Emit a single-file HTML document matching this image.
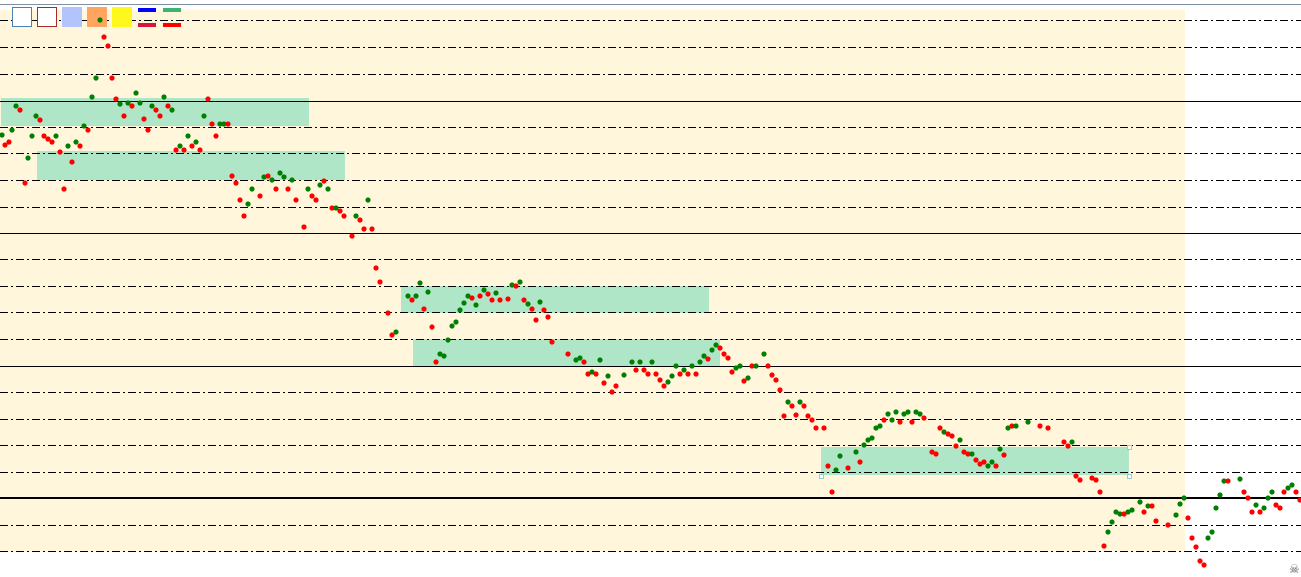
<!DOCTYPE html>
<html><head><style>
html,body{margin:0;padding:0;background:#fff;width:1301px;height:577px;overflow:hidden}
svg{display:block}
</style></head><body>
<svg width="1301" height="577" xmlns="http://www.w3.org/2000/svg">
<rect x="0" y="0" width="1301" height="577" fill="#fff"/>
<line x1="0" y1="4.5" x2="1301" y2="4.5" stroke="#8090a0" stroke-width="1"/>
<rect x="0" y="10" width="1185" height="542" fill="#fff6dc"/>
<g fill="#b0e6c8">
<rect x="1" y="98" width="308" height="28"/>
<rect x="37" y="151" width="308" height="29"/>
<rect x="401" y="286" width="308" height="27"/>
<rect x="413" y="339" width="307" height="27"/>
<rect x="821" y="447" width="308" height="28"/>
</g>
<g stroke="#000" stroke-width="1" stroke-dasharray="8,3,2,3">
<line x1="0" y1="20.5" x2="1301" y2="20.5"/>
<line x1="0" y1="47.5" x2="1301" y2="47.5"/>
<line x1="0" y1="74.5" x2="1301" y2="74.5"/>
<line x1="0" y1="127.5" x2="1301" y2="127.5"/>
<line x1="0" y1="153.5" x2="1301" y2="153.5"/>
<line x1="0" y1="180.5" x2="1301" y2="180.5"/>
<line x1="0" y1="207.5" x2="1301" y2="207.5"/>
<line x1="0" y1="259.5" x2="1301" y2="259.5"/>
<line x1="0" y1="286.5" x2="1301" y2="286.5"/>
<line x1="0" y1="312.5" x2="1301" y2="312.5"/>
<line x1="0" y1="339.5" x2="1301" y2="339.5"/>
<line x1="0" y1="392.5" x2="1301" y2="392.5"/>
<line x1="0" y1="419.5" x2="1301" y2="419.5"/>
<line x1="0" y1="445.5" x2="1301" y2="445.5"/>
<line x1="0" y1="472.5" x2="1301" y2="472.5"/>
<line x1="0" y1="525.5" x2="1301" y2="525.5"/>
<line x1="0" y1="551.5" x2="1301" y2="551.5"/>
</g>
<g stroke="#000">
<line x1="0" y1="101.5" x2="1301" y2="101.5" stroke-width="1"/>
<line x1="0" y1="233.5" x2="1301" y2="233.5" stroke-width="1"/>
<line x1="0" y1="366.5" x2="1301" y2="366.5" stroke-width="1"/>
<line x1="0" y1="498" x2="1301" y2="498" stroke-width="2"/>
</g>
<rect x="12.5" y="7.5" width="19" height="19" fill="#fff" stroke="#4682b4"/>
<rect x="37.5" y="7.5" width="19" height="19" fill="#fff" stroke="#a52a2a"/>
<rect x="62" y="7" width="20" height="20" fill="#b3c3fc"/>
<rect x="87" y="7" width="20" height="20" fill="#ffa560"/>
<rect x="112" y="7" width="20" height="20" fill="#fff81c"/>
<rect x="138" y="8" width="18" height="4" fill="#0000ff"/>
<rect x="138" y="23" width="18" height="4" fill="#dc143c"/>
<rect x="163" y="8" width="18" height="4" fill="#3cb371"/>
<rect x="163" y="23" width="18" height="4" fill="#ff0000"/>
<rect x="1127.5" y="445.5" width="4" height="4" fill="#fff" stroke="#9cc"/>
<rect x="1127.5" y="474.5" width="4" height="4" fill="#fff" stroke="#9cc"/>
<rect x="819.5" y="474.5" width="4" height="4" fill="#fff" stroke="#9cc"/>
<g id="dots"></g>
<text x="1289" y="573" font-family="DejaVu Sans, sans-serif" font-size="12" fill="#555">☠</text>
</svg>
<script>
var d="2,135,g 5,145,r 9,142,r 12,130,g 16,106,g 20,110,r 25,183,r 28,158,g 32,136,g 36,116,g 40,120,r 44,136,r 48,139,r 52,142,r 56,136,g 60,152,r 64,189,r 68,146,g 72,162,r 76,142,g 80,146,r 84,126,g 88,130,r 92,97,g 96,78,g 100,20,g 104,37,r 108,46,r 112,78,r 116,99,r 120,104,g 124,116,r 128,103,g 132,106,r 136,93,g 140,103,g 144,119,r 148,130,r 152,106,g 156,110,r 160,116,r 164,97,g 168,106,r 172,110,g 176,150,r 180,146,g 184,150,r 188,136,g 192,146,r 196,142,g 200,150,r 204,116,g 208,99,r 212,124,r 216,136,r 220,124,g 224,124,g 228,124,r 232,176,r 236,183,r 240,200,r 244,216,r 248,204,g 252,189,g 260,196,r 264,177,g 268,176,r 272,180,g 276,189,r 280,173,g 284,177,g 288,189,r 292,180,g 296,200,r 304,227,r 308,189,g 312,196,r 316,200,r 320,185,g 324,181,r 328,189,g 332,208,r 336,208,g 340,211,r 344,216,r 352,236,r 356,216,g 360,220,r 364,229,r 368,200,g 372,229,r 376,268,r 380,282,r 388,313,r 392,335,r 396,332,g 408,296,g 412,300,r 416,296,g 420,283,g 424,309,r 428,292,g 432,327,r 436,362,r 440,354,g 444,356,g 448,340,g 452,326,g 456,322,g 460,310,g 464,303,g 468,296,g 472,298,r 476,305,g 480,296,r 484,290,g 488,294,r 492,300,r 496,293,g 500,300,r 508,299,r 512,285,g 516,286,r 520,282,g 524,300,r 528,304,g 532,309,r 536,320,r 540,302,g 544,310,r 548,317,r 552,342,r 568,354,r 576,360,g 580,358,g 584,362,r 588,374,r 592,372,g 596,374,r 600,360,g 604,383,r 608,376,g 612,392,r 616,386,r 624,375,g 632,362,g 636,370,r 640,362,g 644,370,r 648,374,r 652,362,g 656,374,r 660,380,r 664,386,r 668,382,g 672,376,g 676,366,g 680,374,r 684,370,g 688,374,r 692,366,g 696,374,r 700,362,g 704,356,g 708,359,r 712,350,g 716,345,g 720,348,r 724,354,r 728,358,r 732,372,r 736,368,g 740,366,g 744,381,r 748,378,g 752,366,r 756,366,g 764,354,g 768,366,r 772,375,r 776,380,r 780,390,r 784,416,r 788,402,g 792,406,r 796,415,r 800,402,g 804,406,r 808,416,r 812,420,r 816,428,r 824,428,r 828,466,r 832,492,r 836,470,g 840,456,g 848,468,r 856,452,g 860,462,r 864,445,g 868,440,g 872,438,g 876,428,g 880,426,g 884,420,r 888,414,g 892,420,g 896,412,g 900,422,r 904,414,g 908,412,g 912,422,r 916,412,g 920,414,g 924,418,r 932,452,r 936,454,r 940,428,r 944,432,g 948,434,r 952,436,r 956,446,r 960,440,g 964,452,r 968,454,r 972,454,g 976,460,r 980,464,r 984,462,r 988,466,g 992,462,g 996,466,r 1000,449,g 1004,455,r 1008,428,g 1012,426,r 1016,426,g 1028,422,g 1040,426,r 1048,428,r 1064,442,r 1068,446,r 1072,442,g 1076,476,r 1080,480,r 1092,478,r 1096,480,r 1100,492,r 1104,546,r 1108,532,g 1112,522,g 1116,512,g 1120,514,g 1124,514,r 1128,512,g 1132,510,g 1140,502,g 1144,512,r 1148,506,g 1152,506,r 1156,521,r 1168,525,r 1176,515,g 1180,504,g 1184,498,g 1188,518,r 1192,538,r 1196,547,r 1200,561,r 1204,565,r 1208,538,g 1212,532,g 1216,508,g 1220,495,g 1224,481,g 1228,481,r 1240,479,g 1244,492,r 1248,498,r 1252,512,r 1256,505,g 1260,512,r 1264,508,g 1268,498,g 1272,492,g 1276,505,r 1280,508,r 1284,492,r 1288,488,g 1292,485,g 1296,492,r 1300,500,r";
var g=document.getElementById("dots"),s="";
d.split(" ").forEach(function(t){var p=t.split(",");s+='<circle cx="'+p[0]+'" cy="'+p[1]+'" r="2.6" fill="'+(p[2]=="g"?"#008000":"#ff0000")+'"/>';});
g.innerHTML=s;
</script>
</body></html>
